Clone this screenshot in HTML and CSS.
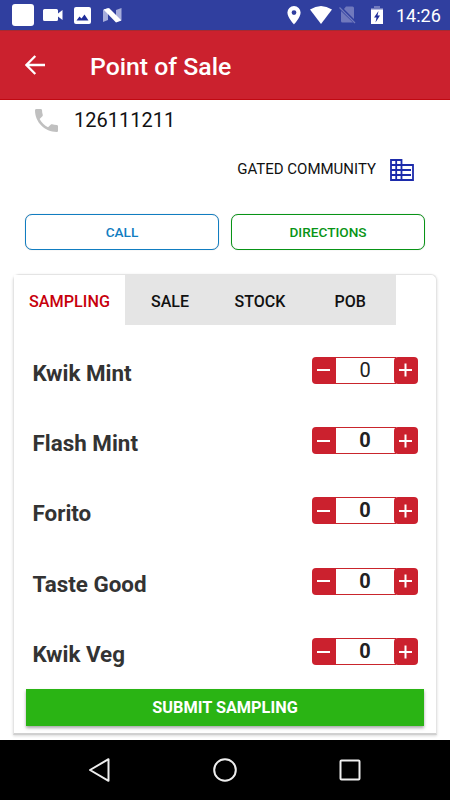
FILE: index.html
```html
<!DOCTYPE html>
<html lang="en">
<head>
	<meta charset="UTF-8" />
	<title>Point of Sale</title>
	<link rel="stylesheet" href="styles.css">
</head>
<body>
	<div class="status">
		<svg class="st-app" width="22" height="22" viewBox="0 0 22 22"><rect width="22" height="22" rx="3" fill="#fff"/></svg>
		<svg class="st-video" width="20" height="12" viewBox="0 0 20 12"><path d="M1.5 0h12Q15 0 15 1.5v3L19.500 1v10L15 7.500v3Q15 12 13.500 12h-12Q0 12 0 10.500v-9Q0 0 1.500 0z" fill="#fff"/></svg>
		<svg class="st-image" width="17" height="17" viewBox="0 0 17 17"><rect width="17" height="17" rx="2" fill="#fff"/><path d="M2.500 13.500l3-4 2 2 3-4 4 6z" fill="#1f2d9a"/></svg>
		<svg class="st-n" width="19" height="15" viewBox="0 0 19 15"><path d="M0 2l5-2v12l-5 2zM13 2l5.500-2v12L13 14z" fill="#a6addb"/><path d="M.5 1.500L6 0l12.500 12.500L13 14.500z" fill="#fff"/></svg>
		<svg class="st-pin" width="14" height="19" viewBox="0 0 14 19"><path fill-rule="evenodd" d="M7 0a6.600 6.600 0 0 0-6.600 6.600C.4 11.500 7 18.500 7 18.500s6.600-7 6.600-11.900A6.600 6.600 0 0 0 7 0zm0 4.200a2.400 2.400 0 1 1 0 4.800 2.400 2.400 0 0 1 0-4.800z" fill="#fff"/></svg>
		<svg class="st-wifi" width="22" height="18" viewBox="0 0 22 18"><path d="M0 3.500Q11-3.500 22 3.500L11 18z" fill="#fff"/></svg>
		<svg class="st-sim" width="17" height="18" viewBox="0 0 17 18"><path d="M7 .5h6.500Q15 .5 15 2v11L5 3zM2 5l12 11.500H3.500Q2 16.500 2 15z" fill="#7079bd"/><path d="M.5 1.500l15.500 15.500" stroke="#7079bd" stroke-width="1.200"/></svg>
		<svg class="st-battery" width="12" height="18" viewBox="0 0 12 18"><path d="M3 0h6v2h3v2H0V2h3z" fill="#7079bd"/><path d="M0 3.500h12V18H0z" fill="#fff"/><path d="M7.500 5L3 11.500h2.500L4.500 16.500 9 9.500H6.500z" fill="#1f2d9a"/></svg>
		<span class="time">14:26</span>
	</div>
	<div class="header">
		<svg width="20" height="20" viewBox="0 0 20 20"><path d="M10.300 1L1.400 10l8.900 9M1.400 10H20" fill="none" stroke="#fff" stroke-width="2.300"/></svg>
		<h1>Point of Sale</h1>
	</div>
	<div class="content">
		<div class="phone">
			<svg width="23" height="23" viewBox="3 3 18 18"><path d="M6.620 10.790c1.440 2.830 3.760 5.140 6.590 6.590l2.200-2.200c.27-.27.670-.36 1.020-.24 1.120.37 2.330.57 3.570.57.550 0 1 .45 1 1V20c0 .55-.45 1-1 1-9.390 0-17-7.610-17-17 0-.55.45-1 1-1h3.500c.55 0 1 .45 1 1 0 1.250.2 2.450.57 3.570.11.350.03.740-.25 1.020z" fill="#c0c0c0"/></svg>
			<span>126111211</span>
		</div>
		<div class="type">
			<span>GATED COMMUNITY</span>
			<svg width="24" height="22" viewBox="0 0 24 22"><path d="M1 1h10.500v20H1zM11.500 6H23v15H11.500M6.200 1v20M1 6h10.500M1 11h20M1 16h20" fill="none" stroke="#1c2bab" stroke-width="1.800"/></svg>
		</div>
		<div class="actions">
			<button class="btn call">CALL</button>
			<button class="btn directions">DIRECTIONS</button>
		</div>
		<div class="card">
			<div class="tabs">
				<div class="tab active">SAMPLING</div>
				<div class="tab sale">SALE</div>
				<div class="tab stock">STOCK</div>
				<div class="tab pob">POB</div>
			</div>
			<div class="list">
				<div class="item">
					<span class="name">Kwik Mint</span>
					<div class="counter"><span class="step minus"></span><span class="num light">0</span><span class="step plus"></span></div>
				</div>
				<div class="item">
					<span class="name">Flash Mint</span>
					<div class="counter"><span class="step minus"></span><span class="num">0</span><span class="step plus"></span></div>
				</div>
				<div class="item">
					<span class="name">Forito</span>
					<div class="counter"><span class="step minus"></span><span class="num">0</span><span class="step plus"></span></div>
				</div>
				<div class="item">
					<span class="name">Taste Good</span>
					<div class="counter"><span class="step minus"></span><span class="num">0</span><span class="step plus"></span></div>
				</div>
				<div class="item">
					<span class="name">Kwik Veg</span>
					<div class="counter"><span class="step minus"></span><span class="num">0</span><span class="step plus"></span></div>
				</div>
			</div>
			<button class="submit">SUBMIT SAMPLING</button>
		</div>
	</div>
	<div class="nav">
		<svg width="24" height="24" viewBox="0 0 24 24"><path d="M20.500 1.200v21.600L2 12z" fill="none" stroke="#eee" stroke-width="2" stroke-linejoin="round"/></svg>
		<svg width="24" height="24" viewBox="0 0 24 24"><circle cx="12" cy="12" r="10.800" fill="none" stroke="#eee" stroke-width="2"/></svg>
		<svg width="24" height="24" viewBox="0 0 24 24"><rect x="2.500" y="2.500" width="19" height="19" rx="1" fill="none" stroke="#eee" stroke-width="2"/></svg>
	</div>
</body>
</html>
```
FILE: styles.css
```css
*{
	box-sizing:border-box;
}
body{
	margin:0;
	width: 450px;
	height: 800px;
	overflow:hidden;
	display:flex;
	flex-direction:column;
	background-color: #fff;
	font-family:Roboto,sans-serif;
}
svg{
	display:block;
	flex:none;
}
button{
	font-family:inherit;
	padding:0;
}
.status{
	flex:none;
	height: 30px;
	display:flex;
	align-items:center;
	padding-left:12px;
	background-color: #303f9f;
	color:#fff;
}
.st-video{
	margin-left:9px;
}
.st-image{
	margin-left:11px;
}
.st-n{
	margin-left:12px;
}
.st-pin{
	margin-left:165px;
}
.st-wifi{
	margin-left:9px;
}
.st-sim{
	margin-left:7px;
}
.st-battery{
	margin-left:15px;
}
.time{
	margin:1px 0 0 13px;
	font-size:18px;
	line-height:30px;
}
.header{
	flex:none;
	height: 70px;
	display:flex;
	align-items:center;
	padding-left:25px;
	background-color: #cb212e;
	border-top:1px solid #a62931;
	border-bottom:1px solid #c00912;
	color:#fff;
}
.header h1{
	margin:2px 0 0 45px;
	font-size:24.8px;
	font-weight:500;
}
.content{
	flex:none;
	height: 640px;
	overflow:hidden;
}
.phone{
	height: 40px;
	display:flex;
	align-items:center;
	padding-left:35px;
	font-size:20px;
	color:#111;
}
.phone span{
	margin-left:16px;
}
.type{
	height: 60px;
	display:flex;
	justify-content:flex-end;
	align-items:center;
	padding-right:36px;
	font-size:15px;
	color:#111;
}
.type span{
	padding-bottom:3px;
}
.type svg{
	margin-left:14px;
}
.actions{
	display:flex;
	gap:12px;
	padding:14px 25px 0;
}
.btn{
	flex:1;
	height: 36px;
	border:1px solid;
	border-radius:7px;
	background-color: #fff;
	font-size:13.6px;
	font-weight:500;
	box-shadow:0 0 1px rgba(0,0,0,0.3);
}
.call{
	color:#117dc1;
}
.directions{
	color:#089416;
}
.card{
	margin:24px 13px 0;
	height: 461px;
	border:1px solid #e4e4e4;
	border-bottom:2px solid #d0d0d0;
	border-radius:6px 6px 0 0;
	box-shadow:0 1px 3px rgba(0,0,0,0.15);
}
.tabs{
	display:flex;
	height: 50px;
}
.tab{
	display:flex;
	align-items:center;
	justify-content:center;
	padding-top:2px;
	width: 90px;
	background-color: #e5e5e5;
	color:#111;
	font-size:16px;
	font-weight:500;
}
.tab.active{
	width: 111px;
	background-color: #fff;
	color:#c7000b;
	font-size:16.2px;
}
.tab.pob{
	width: 90.5px;
}
.list{
	padding:10px 18.5px 0;
}
.item{
	height: 70.4px;
	display:flex;
	align-items:center;
	justify-content:space-between;
}
.name{
	padding-top:5px;
	font-size:22.4px;
	font-weight:700;
	color:#333;
}
.counter{
	display:flex;
	width: 106px;
	height: 27px;
	border-radius:4px;
}
.step{
	position:relative;
	width: 24px;
	border-radius:4px;
	background-color: #cb212e;
}
.minus{
	border-radius:4px 1px 1px 4px;
}
.step:before,.plus:after{
	content:"";
	position:absolute;
	left:50%;
	top:50%;
	width: 13px;
	height: 2px;
	margin:-1px 0 0 -6.5px;
	background-color: #fff;
}
.plus:after{
	transform:rotate(90deg);
}
.num{
	flex:1;
	margin:0 -2px 0 -1px;
	border:solid #c9252c;
	border-width:1px 0;
	text-align:center;
	line-height:25px;
	font-size:20px;
	font-weight:700;
	color:#222;
}
.num.light{
	font-weight:400;
}
.submit{
	display:block;
	width: 398px;
	height: 37px;
	margin:2px 0 0 12px;
	border:0;
	background-color: #2ab414;
	color:#fff;
	font-size:16.3px;
	font-weight:700;
	box-shadow:0 2px 3px rgba(0,0,0,0.35);
}
.nav{
	flex:none;
	height: 60px;
	display:flex;
	justify-content:center;
	align-items:center;
	gap:101px;
	background-color: #000;
}
```
